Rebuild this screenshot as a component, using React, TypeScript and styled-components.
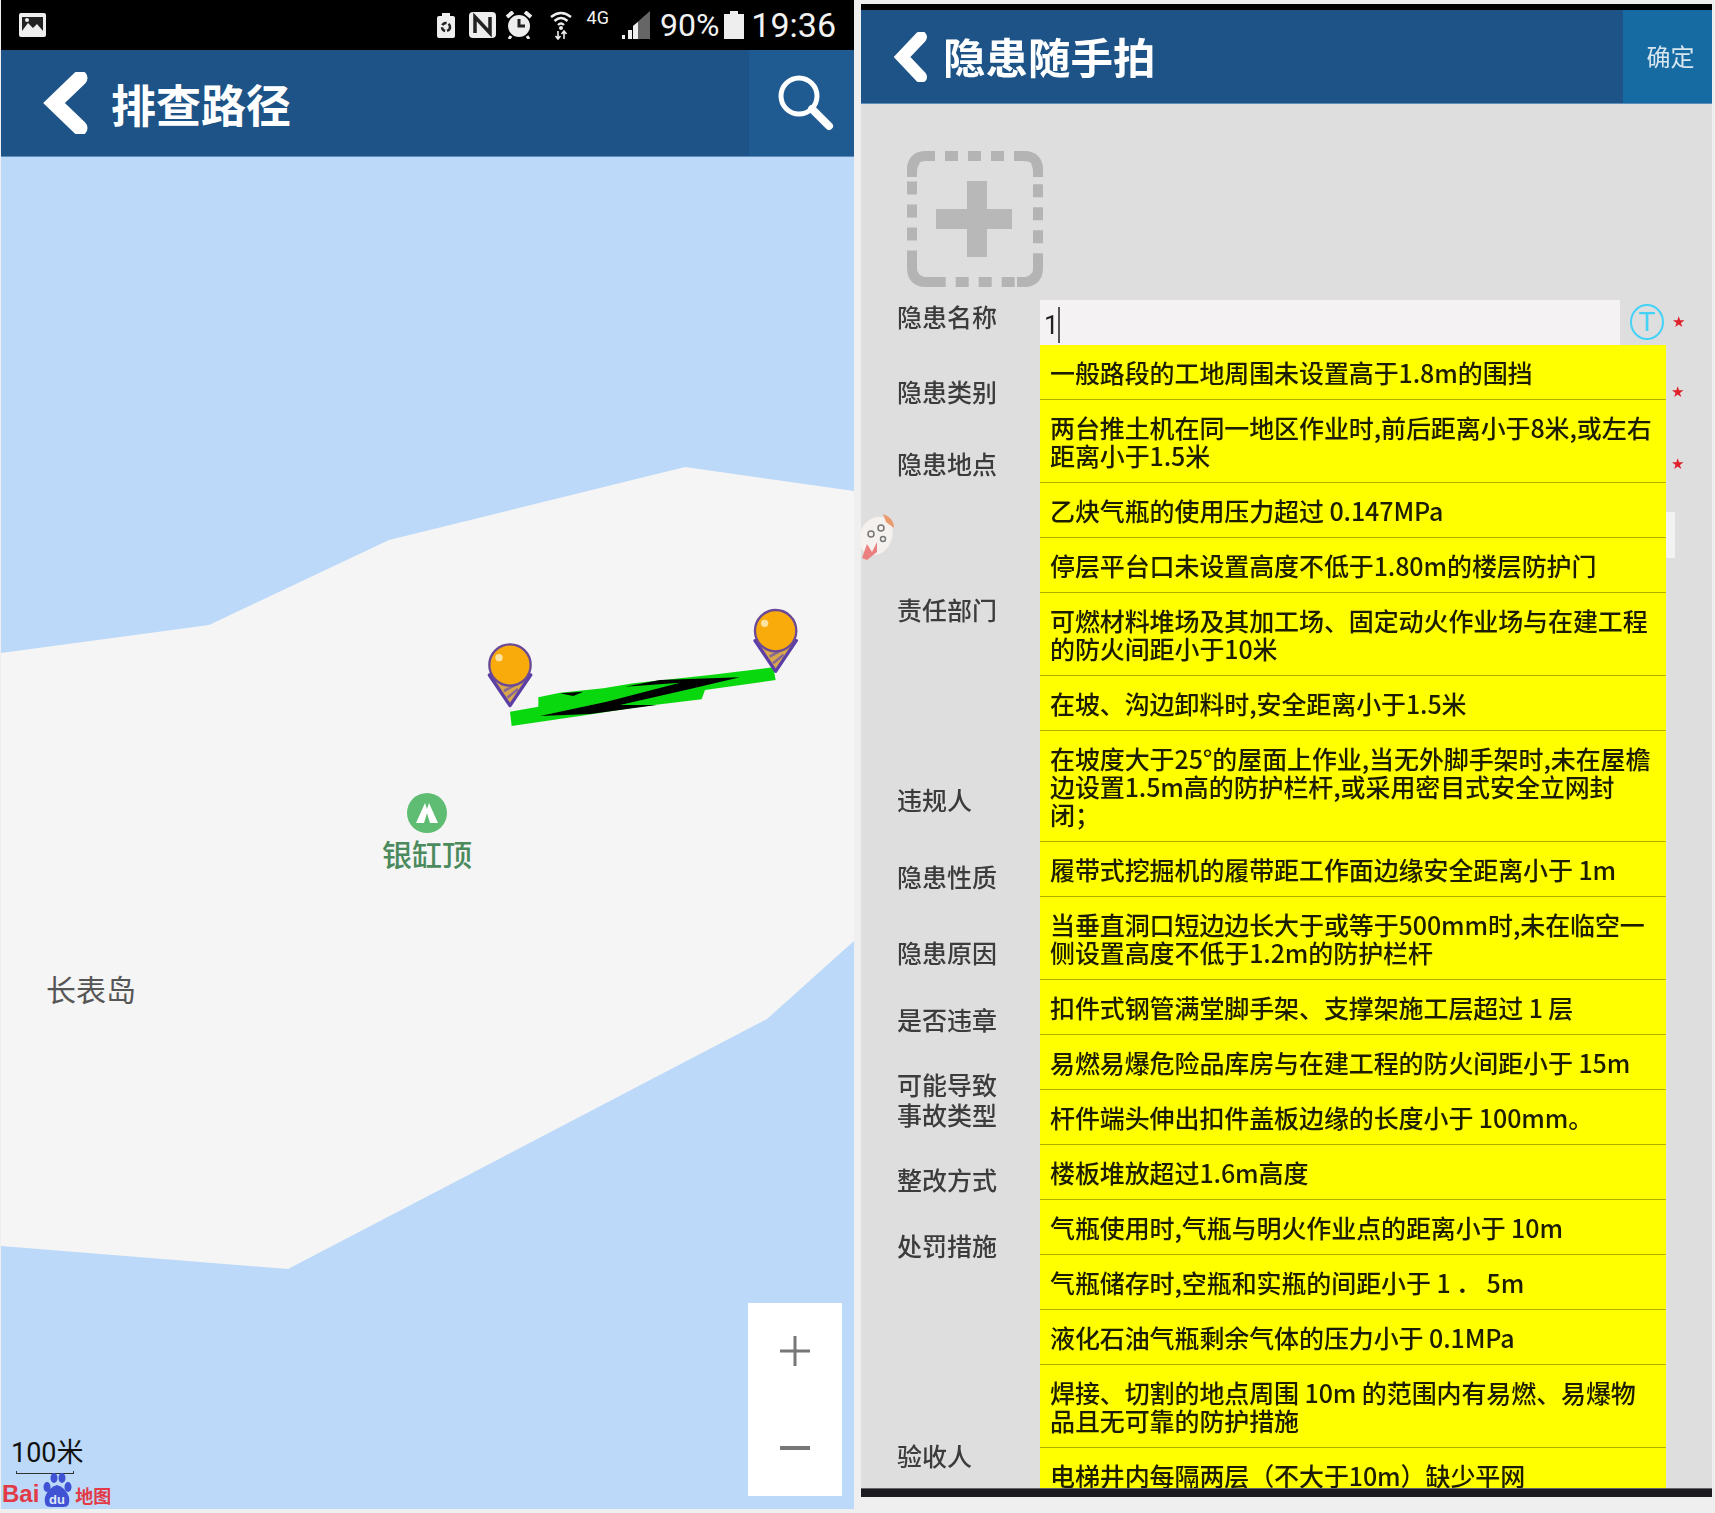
import React from "react";
import styled, {createGlobalStyle} from "styled-components";

const GlobalStyle = createGlobalStyle`
    html, body {
        margin: 0;
        background: #f0eff0;
        font-family: "Noto Sans CJK SC", "Noto Sans", sans-serif;
    }
`;

const Page = styled.div`
    display: flex;
    align-items: flex-start;
    width: 1715px;
    height: 1513px;
    padding-left: 1px;
    box-sizing: border-box;
    overflow: hidden;
    filter: blur(0.7px);
`;

const LeftPanel = styled.section`
    width: 853px;
    flex: none;
`;

const RightPanel = styled.section`
    width: 851px;
    flex: none;
    margin: 4px 0 0 7px;
`;

const StatusBar = styled.div`
    height: 50px;
    background: #000;
    display: flex;
    align-items: center;
    padding: 0 18px 0 17px;
    color: #f2f2f2;
`;

const StatusIcon = styled.svg<{$ml: number}>`
    flex: none;
    margin-left: ${(p) => p.$ml}px;
    &:first-child {
        margin-right: auto;
    }
`;

const StatusText = styled.span<{$ml: number; $size: number; $lift?: number}>`
    margin-left: ${(p) => p.$ml}px;
    font-family: Roboto, "Liberation Sans", sans-serif;
    font-size: ${(p) => p.$size}px;
    line-height: 50px;
    transform: translateY(${(p) => -(p.$lift ?? 0)}px);
`;

const Header = styled.header<{$height: number}>`
    height: ${(p) => p.$height}px;
    box-sizing: border-box;
    background: #1d5386;
    border-bottom: 1px solid #5f8db9;
    display: flex;
    align-items: stretch;
    color: #fff;
`;

const BackIcon = styled.svg<{$left: number}>`
    align-self: center;
    flex: none;
    margin-left: ${(p) => p.$left}px;
`;

const Title = styled.h1<{$size: number; $left: number}>`
    margin: 0 auto 0 ${(p) => p.$left}px;
    align-self: center;
    font-size: ${(p) => p.$size}px;
    font-weight: 700;
    line-height: 1;
`;

const HeaderAction = styled.div<{$width: number; $bg: string}>`
    width: ${(p) => p.$width}px;
    box-sizing: border-box;
    padding: 0 0 2px 6px;
    background: ${(p) => p.$bg};
    display: flex;
    align-items: center;
    justify-content: center;
    font-size: 24px;
    color: #d8e6f0;
`;

const MapCanvas = styled.div`
    position: relative;
    height: 1352px;
    background: #bcd9f9;
    overflow: hidden;
`;

const MapBase = styled.svg`
    display: block;
`;

const PoiMarker = styled.div`
    position: absolute;
    left: 426px;
    top: 636px;
    transform: translateX(-50%);
    display: flex;
    flex-direction: column;
    align-items: center;
    color: #4a8a5c;
    font-size: 30px;
    font-weight: 500;
    line-height: 40px;
    white-space: nowrap;
`;

const PlaceName = styled.div`
    position: absolute;
    left: 45px;
    top: 811px;
    color: #565656;
    font-size: 30px;
    line-height: 40px;
`;

const ZoomControl = styled.div`
    position: absolute;
    left: 747px;
    top: 1146px;
    width: 94px;
    height: 193px;
    background: #fff;
    display: flex;
    flex-direction: column;
    align-items: center;
    justify-content: space-around;
`;

const ScaleBar = styled.div`
    position: absolute;
    left: 10px;
    top: 1278px;
    color: #111;
    font-family: Roboto, "Noto Sans CJK SC", sans-serif;
    font-size: 27px;
    line-height: 36px;
    white-space: nowrap;
    &::after {
        content: "";
        display: block;
        width: 58px;
        height: 3px;
        margin: 0 0 0 5px;
        border: 1px solid #333;
        border-top: 0;
        box-sizing: border-box;
    }
`;

const BaiduLogo = styled.div`
    position: absolute;
    left: 1px;
    top: 1314px;
    display: flex;
    align-items: flex-end;
    color: #e23a46;
    font-family: "Liberation Sans", sans-serif;
    font-weight: 700;
    font-size: 24px;
    line-height: 30px;
`;

const LogoCn = styled.span`
    font-family: "Noto Sans CJK SC", sans-serif;
    font-size: 18px;
    font-weight: 700;
    line-height: 28px;
`;

const TopStrip = styled.div`
    height: 6px;
    background: #000;
`;

const FormBody = styled.div`
    position: relative;
    height: 1384px;
    background: #dedede;
    overflow: hidden;
`;

const AddPhoto = styled.svg`
    display: block;
    margin: 47px 0 13px 46px;
`;

const FormRow = styled.div<{$gap: number}>`
    display: flex;
    align-items: center;
    margin-top: ${(p) => p.$gap}px;
    padding-left: 36px;
    min-height: 30px;
`;

const FieldLabel = styled.label`
    width: 143px;
    flex: none;
    color: #3c3c3c;
    font-size: 25px;
    font-weight: 500;
    line-height: 29.5px;
    white-space: pre-line;
`;

const NameLabel = styled(FieldLabel)`
    margin-bottom: 11px;
`;

const NameInput = styled.div`
    width: 580px;
    height: 45px;
    flex: none;
    box-sizing: border-box;
    padding: 4px 0 0 4px;
    background: #f4f2f3;
    color: #222;
    font-family: Roboto, sans-serif;
    font-size: 26px;
    line-height: 40px;
    display: flex;
    align-items: center;
`;

const Caret = styled.span`
    width: 2px;
    height: 36px;
    margin-left: -1px;
    background: #555;
`;

const ClearMark = styled.span`
    width: 34px;
    height: 36px;
    flex: none;
    margin: 0 0 1px 10px;
    box-sizing: border-box;
    border: 2px solid #45d2f7;
    border-radius: 50%;
    color: #45d2f7;
    font-family: "Liberation Sans", sans-serif;
    font-size: 28px;
    line-height: 31px;
    text-align: center;
`;

const Required = styled.span<{$left: number}>`
    margin-left: ${(p) => p.$left}px;
    color: #e0202a;
    font-family: "DejaVu Sans", sans-serif;
    font-size: 15px;
    line-height: 1;
`;

const SuggestList = styled.ul`
    position: absolute;
    left: 179px;
    top: 241px;
    width: 626px;
    bottom: 0;
    margin: 0;
    padding: 0;
    list-style: none;
    background: #ffff00;
    overflow: hidden;
`;

const SuggestItem = styled.li`
    padding: 13px 10px 13px 10px;
    border-bottom: 1px solid #b0b000;
    color: #1c1c00;
    font-size: 25px;
    font-weight: 500;
    line-height: 28px;
    letter-spacing: -0.1px;
`;

const ScrollThumb = styled.div`
    position: absolute;
    left: 805px;
    top: 408px;
    width: 9px;
    height: 46px;
    background: #f2f2f2;
`;

const FloatingBadge = styled.svg`
    position: absolute;
    left: 0;
    top: 408px;
`;

const BottomBar = styled.div`
    height: 9px;
    background: #1c1c20;
    border-top: 1px solid #666;
    box-sizing: border-box;
`;

const suggestions = [
    "一般路段的工地周围未设置高于1.8m的围挡",
    "两台推土机在同一地区作业时,前后距离小于8米,或左右距离小于1.5米",
    "乙炔气瓶的使用压力超过 0.147MPa",
    "停层平台口未设置高度不低于1.80m的楼层防护门",
    "可燃材料堆场及其加工场、固定动火作业场与在建工程的防火间距小于10米",
    "在坡、沟边卸料时,安全距离小于1.5米",
    "在坡度大于25°的屋面上作业,当无外脚手架时,未在屋檐边设置1.5m高的防护栏杆,或采用密目式安全立网封闭；",
    "履带式挖掘机的履带距工作面边缘安全距离小于 1m",
    "当垂直洞口短边边长大于或等于500mm时,未在临空一侧设置高度不低于1.2m的防护栏杆",
    "扣件式钢管满堂脚手架、支撑架施工层超过 1 层",
    "易燃易爆危险品库房与在建工程的防火间距小于 15m",
    "杆件端头伸出扣件盖板边缘的长度小于 100mm。",
    "楼板堆放超过1.6m高度",
    "气瓶使用时,气瓶与明火作业点的距离小于 10m",
    "气瓶储存时,空瓶和实瓶的间距小于 1 ． 5m",
    "液化石油气瓶剩余气体的压力小于 0.1MPa",
    "焊接、切割的地点周围 10m 的范围内有易燃、易爆物品且无可靠的防护措施",
    "电梯井内每隔两层（不大于10m）缺少平网",
];

const fields = [
    {label: "隐患类别", gap: 32, star: true},
    {label: "隐患地点", gap: 42, star: true},
    {label: "责任部门", gap: 116, star: false},
    {label: "违规人", gap: 160, star: false},
    {label: "隐患性质", gap: 47, star: false},
    {label: "隐患原因", gap: 46, star: false},
    {label: "是否违章", gap: 37, star: false},
    {label: "可能导致\n事故类型", gap: 35, star: false},
    {label: "整改方式", gap: 36, star: false},
    {label: "处罚措施", gap: 36, star: false},
    {label: "验收人", gap: 180, star: false},
];

const Pin: React.FC<{x: number; y: number}> = ({x, y}) => (
    <g transform={`translate(${x} ${y})`}>
        <path d="M-62 30 L0 122 L62 30 Z" fill="#d9a84a" stroke="#5b3fa6" strokeWidth="10" strokeLinejoin="round"/>
        <path d="M-18 78 L18 58 M-8 98 L24 72" stroke="#8a6a90" strokeWidth="8"/>
        <circle r="62" fill="#f9ab0c" stroke="#6a4a96" strokeWidth="7"/>
        <circle cx="-33" cy="-22" r="11" fill="#fde3a0"/>
    </g>
);

const MapShapes: React.FC = () => (
    <MapBase width="853" height="1352" viewBox="0 0 853 1352">
        <polygon
            points="0,496 208,468 388,383 684,310 853,334 853,784 766,862 287,1112 0,1089"
            fill="#f5f5f5"
        />
        <g transform="translate(459 433) scale(0.3333)">
            <polygon
                points="150,365 235,350 235,322 300,308 430,295 520,280 750,255 940,232 947,270 735,300 725,328 540,350 380,375 155,408"
                fill="#0ad80f"
            />
            <polygon
                points="240,378 440,335 660,278 495,290 600,270 840,262 700,295 480,345 590,345 390,372"
                fill="#000"
            />
            <polygon points="300,310 370,305 340,318" fill="#000"/>
            <Pin x={150} y={225}/>
            <Pin x={947} y={122}/>
        </g>
    </MapBase>
);

const App: React.FC = () => (
    <Page>
        <GlobalStyle/>
        <LeftPanel>
            <StatusBar>
                <StatusIcon $ml={0} width="29" height="26" viewBox="0 0 29 26">
                    <rect x="1" y="1" width="27" height="24" rx="2" fill="#eee"/>
                    <path d="M4 19 L10 11 L15 16 L19 12 L25 19 V5 H4 Z" fill="#222"/>
                    <circle cx="9" cy="8" r="2" fill="#eee"/>
                </StatusIcon>
                <StatusIcon $ml={0} width="18" height="26" viewBox="0 0 18 26">
                    <path d="M5 1 H13 V4 H16 Q18 4 18 6 V24 Q18 26 16 26 H2 Q0 26 0 24 V6 Q0 4 2 4 H5 Z" fill="#eee"/>
                    <circle cx="9" cy="15" r="4" fill="none" stroke="#222" strokeWidth="2.5" strokeDasharray="5 2"/>
                </StatusIcon>
                <StatusIcon $ml={13} width="29" height="28" viewBox="0 0 29 28">
                    <rect x="1" y="1" width="27" height="26" rx="4" fill="#eee"/>
                    <path d="M7 22 V6 L22 22 V6" fill="none" stroke="#222" strokeWidth="3.5"/>
                </StatusIcon>
                <StatusIcon $ml={8} width="28" height="28" viewBox="0 0 28 28">
                    <circle cx="14" cy="15" r="11" fill="#eee"/>
                    <path d="M2 6 L8 1 M26 6 L20 1" stroke="#eee" strokeWidth="4"/>
                    <path d="M14 8 V15 H20" fill="none" stroke="#222" strokeWidth="3"/>
                    <path d="M6 25 L4 28 M22 25 L24 28" stroke="#eee" strokeWidth="3"/>
                </StatusIcon>
                <StatusIcon $ml={17} width="22" height="30" viewBox="0 0 22 30">
                    <path d="M1 7 Q11 -1 21 7 M4.5 11 Q11 5 17.500 11 M8 15 Q11 12 14 15" fill="none" stroke="#eee" strokeWidth="2.4"/>
                    <circle cx="11" cy="18" r="2" fill="#eee"/>
                    <path d="M8 21 V29 M5.500 26 L8 29 L10.500 26 M14 29 V21 M11.500 24 L14 21 L16.500 24" fill="none" stroke="#eee" strokeWidth="1.6"/>
                </StatusIcon>
                <StatusText $ml={15} $size={18} $lift={7}>4G</StatusText>
                <StatusIcon $ml={12} width="29" height="28" viewBox="0 0 29 28">
                    <path d="M12 28 V15 L29 0 V28 Z" fill="#666"/>
                    <path d="M1 24 H4 V28 H1 Z M7 19 H11 V28 H7 Z M12 15 L17 11 V28 H12 Z" fill="#eee"/>
                </StatusIcon>
                <StatusText $ml={10} $size={32}>90%</StatusText>
                <StatusIcon $ml={5} width="20" height="28" viewBox="0 0 20 28">
                    <path d="M6 0 H14 V3 H20 V28 H0 V3 H6 Z" fill="#eee"/>
                </StatusIcon>
                <StatusText $ml={7} $size={34}>19:36</StatusText>
            </StatusBar>
            <Header $height={107}>
                <BackIcon $left={41} width="46" height="62" viewBox="0 0 46 62">
                    <polyline points="38,6 12,31 38,56" fill="none" stroke="#fff" strokeWidth="15" strokeLinecap="round" strokeLinejoin="miter"/>
                </BackIcon>
                <Title $size={45} $left={23}>排查路径</Title>
                <HeaderAction $width={105} $bg="#1f5a91">
                    <svg width="58" height="58" viewBox="0 0 58 58">
                        <circle cx="23" cy="23" r="18" fill="none" stroke="#fff" strokeWidth="5"/>
                        <path d="M36 36 L53 53" stroke="#fff" strokeWidth="8" strokeLinecap="round"/>
                    </svg>
                </HeaderAction>
            </Header>
            <MapCanvas>
                <MapShapes/>
                <PoiMarker>
                    <svg width="40" height="40" viewBox="0 0 40 40">
                        <circle cx="20" cy="20" r="20" fill="#5fbd73"/>
                        <path d="M9 30 L18 10 L20 16 L22 10 L31 30 L23 30 L20 20 L17 30 Z" fill="#fff"/>
                    </svg>
                    银缸顶
                </PoiMarker>
                <PlaceName>长表岛</PlaceName>
                <ZoomControl>
                    <svg width="32" height="32" viewBox="0 0 32 32">
                        <path d="M16 1 V31 M1 16 H31" stroke="#777" strokeWidth="3"/>
                    </svg>
                    <svg width="32" height="32" viewBox="0 0 32 32">
                        <path d="M1 16 H31" stroke="#777" strokeWidth="4"/>
                    </svg>
                </ZoomControl>
                <ScaleBar>100米</ScaleBar>
                <BaiduLogo>
                    Bai
                    <svg width="36" height="38" viewBox="0 0 36 38">
                        <ellipse cx="8" cy="16" rx="3.500" ry="5" fill="#3f52d4"/>
                        <ellipse cx="15" cy="7" rx="3.500" ry="5" fill="#3f52d4"/>
                        <ellipse cx="23" cy="7" rx="3.500" ry="5" fill="#3f52d4"/>
                        <ellipse cx="29" cy="16" rx="3.500" ry="5" fill="#3f52d4"/>
                        <path d="M18 14 Q26 16 30 26 Q32 36 24 36 H12 Q4 36 6 26 Q10 16 18 14 Z" fill="#3f52d4"/>
                        <text x="18" y="33" textAnchor="middle" fontSize="13" fontWeight="700" fill="#dfe8fb">du</text>
                    </svg>
                    <LogoCn>地图</LogoCn>
                </BaiduLogo>
            </MapCanvas>
        </LeftPanel>
        <RightPanel>
            <TopStrip/>
            <Header $height={94}>
                <BackIcon $left={31} width="36" height="50" viewBox="0 0 36 50">
                    <polyline points="29,5 10,25 29,45" fill="none" stroke="#fff" strokeWidth="12" strokeLinecap="round"/>
                </BackIcon>
                <Title $size={42.500} $left={15}>隐患随手拍</Title>
                <HeaderAction $width={89} $bg="#176ba3">确定</HeaderAction>
            </Header>
            <FormBody>
                <AddPhoto width="136" height="136" viewBox="0 0 136 136">
                    <rect x="5" y="5" width="126" height="126" rx="14" fill="none" stroke="#b4b4b4" strokeWidth="10" strokeDasharray="13 10" strokeDashoffset="4"/>
                    <path d="M5 26 V19 Q5 5 19 5 H26 M110 5 H117 Q131 5 131 19 V26 M131 110 V117 Q131 131 117 131 H110 M26 131 H19 Q5 131 5 117 V110" fill="none" stroke="#b4b4b4" strokeWidth="10"/>
                    <path d="M60 30 H80 V58 H105 V78 H80 V106 H60 V78 H29 V58 H60 Z" fill="#b8b8b8"/>
                </AddPhoto>
                <FormRow $gap={0}>
                    <NameLabel>隐患名称</NameLabel>
                    <NameInput>1<Caret/></NameInput>
                    <ClearMark>T</ClearMark>
                    <Required $left={8}>★</Required>
                </FormRow>
                {fields.map((f) => (
                    <FormRow key={f.label} $gap={f.gap}>
                        <FieldLabel>{f.label}</FieldLabel>
                        {f.star && <Required $left={631}>★</Required>}
                    </FormRow>
                ))}
                <SuggestList>
                    {suggestions.map((text) => (
                        <SuggestItem key={text}>{text}</SuggestItem>
                    ))}
                </SuggestList>
                <ScrollThumb/>
                <FloatingBadge width="36" height="50" viewBox="0 0 36 50">
                    <ellipse cx="15" cy="24" rx="16" ry="20" transform="rotate(25 15 24)" fill="#f4f1ee"/>
                    <path d="M22 2 Q33 6 33 16 L25 10 Z" fill="#eb9a70"/>
                    <circle cx="10" cy="22" r="3" fill="none" stroke="#777" strokeWidth="1.500"/>
                    <circle cx="20" cy="16" r="3" fill="none" stroke="#777" strokeWidth="1.500"/>
                    <circle cx="22" cy="27" r="2.500" fill="none" stroke="#777" strokeWidth="1.500"/>
                    <path d="M1 46 L6 32 L11 40 L16 30 L16 40 L6 48 Z" fill="#ec7f80"/>
                </FloatingBadge>
            </FormBody>
            <BottomBar/>
        </RightPanel>
    </Page>
);

export default App;
